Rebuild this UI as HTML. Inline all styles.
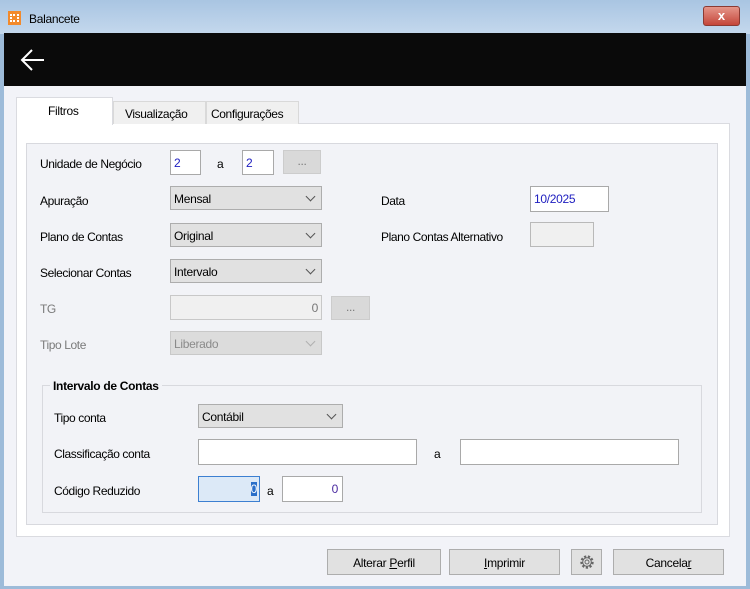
<!DOCTYPE html>
<html><head><meta charset="utf-8"><style>
*{box-sizing:border-box;margin:0;padding:0}
body{width:750px;height:589px;overflow:hidden;background:#9dbbd9;font-family:"Liberation Sans",sans-serif;font-size:12px;color:#000;position:relative}
.a{position:absolute}
.title{left:0;top:0;width:750px;height:34px;background:linear-gradient(#a9c5e2,#c4d8ed)}
.black{left:4px;top:33px;width:742px;height:53px;background:#0a0a0a}
.body{left:4px;top:86px;width:742px;height:500px;background:#f2f3f8}
.panel{left:16px;top:123px;width:714px;height:414px;background:#fff;border:1px solid #dadbe0}
.inner{left:26px;top:143px;width:692px;height:382px;background:#f2f3f7;border:1px solid #d8d9de}
.lbl{font-size:12px;letter-spacing:-0.4px}
.in{background:#fff;border:1px solid #a9a9a9;height:25px;font-size:12px;color:#2020c0;padding:5px 3px;letter-spacing:-0.3px}
.cb{background:#e1e1e1;border:1px solid #adadad;height:24px;padding:5px 3px;letter-spacing:-0.3px}
.cb:after{content:"";position:absolute;right:7px;top:6px;width:6px;height:6px;border-right:1px solid #555;border-bottom:1px solid #555;transform:rotate(45deg)}
.cb.d{color:#8a8a8a;border-color:#c8c8c8;background:#dcdcdc}
.cb.d:after{border-color:#b0b0b0}
.btn{background:#e1e1e1;border:1px solid #adadad;height:26px;text-align:center;padding-top:6px;letter-spacing:-0.3px}
.gray{color:#7a7a7a}
</style></head><body>
<div class="a title"></div>
<div class="a" style="left:8px;top:11px;width:13px;height:14px;background:#f28a2c"></div>
<div class="a" style="left:10px;top:14px;width:9px;height:8px;border:2px dotted #fff"></div>
<div class="a" style="left:29px;top:12px;font-size:12px;letter-spacing:-0.3px">Balancete</div>
<div class="a" style="left:703px;top:6px;width:37px;height:20px;background:linear-gradient(#e5968a,#c4463a);border:1px solid #8b3a33;border-radius:3px;color:#fff;font-weight:bold;text-align:center;font-size:13px;line-height:18px">x</div>
<div class="a black"></div>
<svg class="a" style="left:19px;top:48px" width="28" height="24"><path d="M25 12H3M13 2L3 12l10 10" stroke="#fff" stroke-width="2" fill="none"/></svg>
<div class="a body"></div>
<div class="a panel"></div>
<div class="a" style="left:113px;top:101px;width:93px;height:23px;background:#f0f0f0;border:1px solid #d9d9d9;border-bottom:none;padding:5px 0 0 11px;letter-spacing:-0.4px">Visualização</div>
<div class="a" style="left:206px;top:101px;width:93px;height:23px;background:#f0f0f0;border:1px solid #d9d9d9;border-bottom:none;padding:5px 0 0 4px;letter-spacing:-0.4px">Configurações</div>
<div class="a" style="left:16px;top:97px;width:97px;height:28px;background:#fff;border:1px solid #dadbe0;border-bottom:none;padding:6px 0 0 31px;letter-spacing:-0.3px">Filtros</div>
<div class="a inner"></div>

<div class="a lbl" style="left:40px;top:157px">Unidade de Negócio</div>
<div class="a in" style="left:170px;top:150px;width:31px">2</div>
<div class="a lbl" style="left:217px;top:157px">a</div>
<div class="a in" style="left:242px;top:150px;width:32px">2</div>
<div class="a btn gray" style="left:283px;top:150px;width:38px;height:24px;border-color:#ccc;background:#d9d9d9;padding-top:3px">...</div>

<div class="a lbl" style="left:40px;top:194px">Apuração</div>
<div class="a cb" style="left:170px;top:186px;width:152px">Mensal</div>
<div class="a lbl" style="left:381px;top:194px">Data</div>
<div class="a in" style="left:530px;top:186px;width:79px;height:26px">10/2025</div>

<div class="a lbl" style="left:40px;top:230px">Plano de Contas</div>
<div class="a cb" style="left:170px;top:223px;width:152px">Original</div>
<div class="a lbl" style="left:381px;top:230px">Plano Contas Alternativo</div>
<div class="a" style="left:530px;top:222px;width:64px;height:25px;background:#f0f0f0;border:1px solid #b9b9b9"></div>

<div class="a lbl" style="left:40px;top:266px">Selecionar Contas</div>
<div class="a cb" style="left:170px;top:259px;width:152px">Intervalo</div>

<div class="a lbl gray" style="left:40px;top:302px">TG</div>
<div class="a in" style="left:170px;top:295px;width:152px;background:#f0f0f0;border-color:#c8c8c8;color:#777;text-align:right">0</div>
<div class="a btn gray" style="left:331px;top:296px;width:39px;height:24px;border-color:#ccc;background:#d9d9d9;padding-top:3px">...</div>

<div class="a lbl gray" style="left:40px;top:338px">Tipo Lote</div>
<div class="a cb d" style="left:170px;top:331px;width:152px">Liberado</div>

<div class="a" style="left:42px;top:385px;width:660px;height:128px;border:1px solid #d8d9de"></div>
<div class="a" style="left:50px;top:379px;padding:0 3px;background:#f2f3f7;font-weight:bold;letter-spacing:-0.3px">Intervalo de Contas</div>

<div class="a lbl" style="left:54px;top:411px">Tipo conta</div>
<div class="a cb" style="left:198px;top:404px;width:145px">Contábil</div>

<div class="a lbl" style="left:54px;top:447px">Classificação conta</div>
<div class="a in" style="left:198px;top:439px;width:219px;height:26px"></div>
<div class="a lbl" style="left:434px;top:447px">a</div>
<div class="a in" style="left:460px;top:439px;width:219px;height:26px"></div>

<div class="a lbl" style="left:54px;top:484px">Código Reduzido</div>
<div class="a in" style="left:198px;top:476px;width:62px;height:26px;background:#dce9f7;border-color:#3c7fd1;text-align:right;padding-right:2px"><span style="background:#2a6fc9;color:#fff">0</span></div>
<div class="a lbl" style="left:267px;top:484px">a</div>
<div class="a in" style="left:282px;top:476px;width:61px;height:26px;text-align:right;padding-right:4px;color:#4a2aa0">0</div>

<div class="a btn" style="left:327px;top:549px;width:114px">Alterar <u>P</u>erfil</div>
<div class="a btn" style="left:449px;top:549px;width:111px"><u>I</u>mprimir</div>
<div class="a btn" style="left:571px;top:549px;width:31px;padding-top:4px"><svg width="16" height="16" viewBox="0 0 16 16"><circle cx="8" cy="8" r="5.5" fill="none" stroke="#666" stroke-width="2.4" stroke-dasharray="2.2 1.6"/><circle cx="8" cy="8" r="4.3" fill="#e1e1e1" stroke="#666" stroke-width="1"/><circle cx="8" cy="8" r="2" fill="none" stroke="#666"/></svg></div>
<div class="a btn" style="left:613px;top:549px;width:111px">Cancela<u>r</u></div>
</body></html>
